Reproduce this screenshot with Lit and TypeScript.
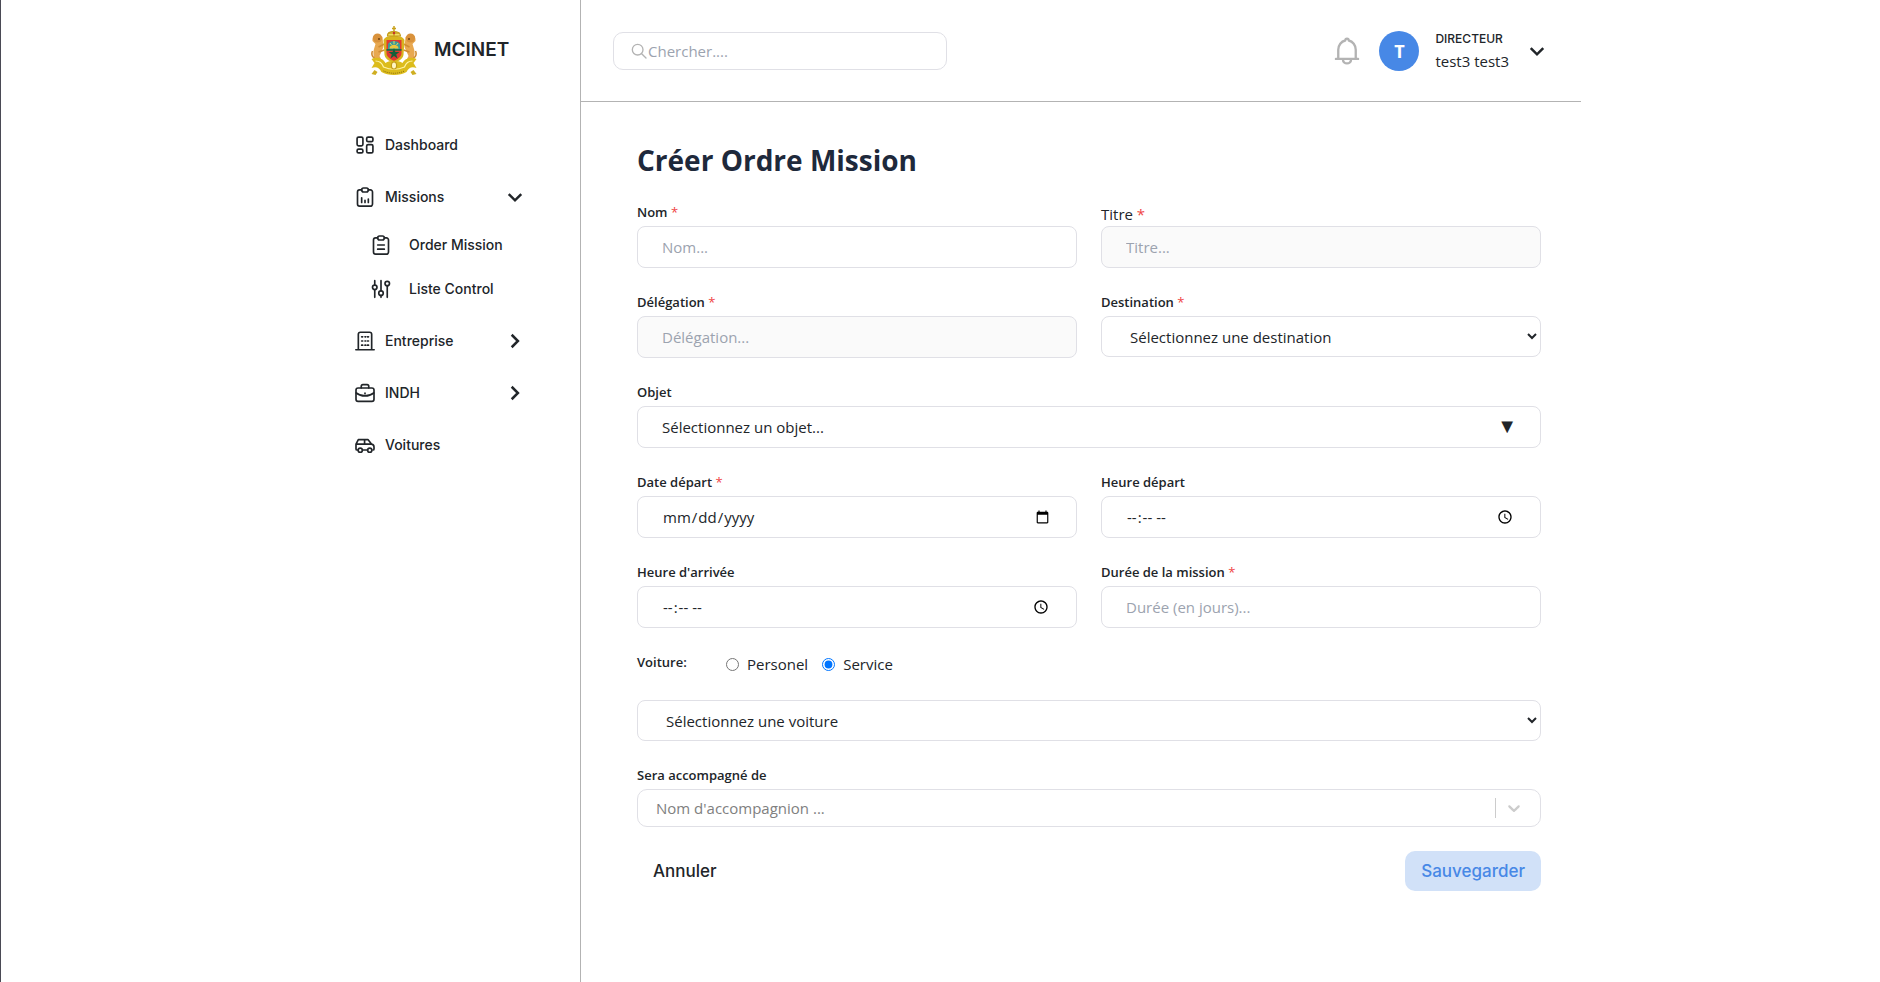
import { LitElement, html, css, svg } from "lit";
import { customElement, state } from "lit/decorators.js";

const ICONS: Record<string, unknown> = {
  dashboard: svg`<rect x="2.5" y="2.5" width="7" height="10.5" rx="1.8"/><rect x="14" y="2.5" width="7.5" height="5.5" rx="1.8"/><rect x="2.5" y="17" width="7" height="4.5" rx="1.8"/><rect x="14" y="11.500" width="7.500" height="10" rx="1.8"/>`,
  report: svg`<path d="M8 3.500H5.500a2.500 2.500 0 0 0-2.500 2.500V20.500a2.500 2.500 0 0 0 2.500 2.500h13a2.500 2.500 0 0 0 2.500-2.500V6a2.500 2.500 0 0 0-2.500-2.500H16"/><path d="M8 3.300C8 2 9 1.200 10.200 1.200h3.600C15 1.200 16 2 16 3.300S15 6 13.800 6h-3.600C9 6 8 4.600 8 3.300Z"/><path d="M8 18.500v-5.500M12 18.500v-2.500M16 18.500v-4"/>`,
  clipboard: svg`<path d="M8 3.500H5.500a2.500 2.500 0 0 0-2.500 2.500V20.500a2.500 2.500 0 0 0 2.500 2.500h13a2.500 2.500 0 0 0 2.500-2.500V6a2.500 2.500 0 0 0-2.500-2.500H16"/><path d="M8 3.300C8 2 9 1.200 10.200 1.200h3.600C15 1.200 16 2 16 3.300S15 6 13.800 6h-3.600C9 6 8 4.600 8 3.300Z"/><path d="M8 12h8M8 17h8"/>`,
  sliders: svg`<path d="M4.500 2v5M4.500 13v9M12 2v12M12 20v2M19.500 8v14"/><circle cx="4.500" cy="10" r="2.700"/><circle cx="12" cy="17" r="2.700"/><circle cx="19.500" cy="5.500" r="2.700"/>`,
  building: svg`<path d="M1 22.500h22M4 22V4a2.500 2.500 0 0 1 2.500-2.500h11A2.500 2.500 0 0 1 20 4v18"/><path d="M8 7h1.200M12 7h.8M15 7h1.200M8 12h1.200M12 12h.8M15 12h1.200M8 17h1.200M12 17h.8M15 17h1.200"/>`,
  briefcase: svg`<rect x="1.200" y="6" width="21.600" height="16" rx="2.500"/><path d="M7.500 6V4A2 2 0 0 1 9.500 2h5a2 2 0 0 1 2 2v2M1.500 12c6 4.700 15 4.700 21 0M12 12.200v.6"/>`,
  car: svg`<path d="M3.500 18H2.500a1.300 1.300 0 0 1-1.300-1.300V11L4 5.500h11.500L20 11c2 .5 2.800 1.500 2.800 3.500v2.200c0 .8-.5 1.300-1.300 1.300M9 18h6M1.500 11H20M11.500 5.500V11"/><circle cx="6.300" cy="18.200" r="2.500"/><circle cx="17.700" cy="18.200" r="2.500"/>`,
  down: svg`<path d="M4.500 8.500l7.500 7.500 7.500-7.500"/>`,
  right: svg`<path d="M8 4.500l7.500 7.500-7.500 7.500"/>`,
  search: svg`<circle cx="10" cy="10" r="8"/><path d="M16 16l6.500 6.500"/>`,
  bell: svg`<path d="M4.500 18.500V11c0-4 2.600-7.300 6-8 .1-2.100 2.900-2.100 3 0 3.400.7 6 4 6 8v7.500M2.500 18.800h19M8.500 19c0 4.900 7 4.900 7 0"/>`,
};

const icon = (name: string, cls = "icon") =>
  html`<svg class=${cls} viewBox="0 0 24 24" aria-hidden="true">${ICONS[name]}</svg>`;

const lion = svg`
  <path d="M9 10C5 8 1.500 11 2 16l3 3-1.500 5C2 29 4 31 3 36l3 3 5-4-2-4 4-9-1-10Z" fill="#e8a850"/>
  <circle cx="7" cy="13" r="4.600" fill="#d9923c"/><circle cx="8.500" cy="14" r="1" fill="#6d4211"/>
  <path d="M8 22l6-3M8 27l6-2M4 33c-3-1-3-5-2-7" fill="none" stroke="#d08b32" stroke-width="1.600"/>`;

const emblem = html`
  <svg class="emblem" viewBox="0 0 47 51" role="img" aria-label="Armoiries">
    ${lion}
    <g transform="translate(47 0) scale(-1 1)">${lion}</g>
    <path d="M13 15c2-4 6-4 10.500-4S32 11 34 15l-1 15c-1 5-6 6-9.500 8-3.500-2-8.500-3-9.500-8Z" fill="#d8b51f"/>
    <path d="M17 11c-1-6 13-6 13 0Z" fill="#f2dc66" stroke="#c29a18" stroke-width="1.200"/>
    <path d="M23.500 1v10M21.500 3.500h4M18 8h11" stroke="#c9a21c" stroke-width="1.500"/>
    <circle cx="23.500" cy="8" r="1.200" fill="#c8322d"/>
    <path d="M16 15h15v13c0 4-4 6-7.500 8-3.500-2-7.500-4-7.500-8Z" fill="#e03a30"/>
    <path d="M17.500 24v-5c2-4 10-4 12 0v5Z" fill="#3b9b9a"/>
    <path d="M19 23.500c0-5 9-5 9 0Z" fill="#ecc63a"/>
    <path d="M23.500 16v3M19.500 18l1.500 2M27.500 18L26 20" stroke="#e8d65c"/>
    <path d="M16 24h15v1.800H16Z" fill="#1d6b4a"/>
    <path d="M23.500 23l1.400 4h4.100l-3.300 2.500 1.300 4-3.500-2.500-3.500 2.500 1.300-4L18 27h4.100Z" fill="#14603a"/>
    <path d="M1 34c6-3 12 0 14 4 4-3 13-3 17 0 2-4 8-7 14-4l-3 4 3 5c-5-2-8 0-10 4-6 4-19 4-25 0-2-4-5-6-10-4l3-5Z" fill="#dcbc1c"/>
    <path d="M5 36c5 0 7 3 8 6 7 3 14 3 21 0 1-3 3-6 8-6" fill="none" stroke="#fff4a8" stroke-width="1.200"/>
    <path d="M13 46c7 3 14 3 21 0" fill="none" stroke="#8a6d10" stroke-dasharray="1 1"/>
    <ellipse cx="23.500" cy="40.500" rx="2.600" ry="3.500" fill="#fff6c4" stroke="#c29a18" stroke-width="1.200"/>
    <path d="M1 49l3-4 3 2-2 3Z M46 49l-3-4-3 2 2 3Z" fill="#cfae20"/>
  </svg>`;

const shared = css`
  * { box-sizing: border-box; }
  .icon { width: 20px; height: 20px; flex: none; fill: none; stroke: currentColor; stroke-width: 2; stroke-linecap: round; stroke-linejoin: round; }
  .chevron { width: 20px; height: 20px; flex: none; fill: none; stroke: currentColor; stroke-width: 3; }
  button, input, select { font: inherit; color: inherit; margin: 0; }
  button { border: 0; background: none; padding: 0; cursor: pointer; }
`;

@customElement("side-bar")
export class SideBar extends LitElement {
  static styles = [shared, css`
    :host { display: block; box-sizing: border-box; width: 280px; flex: none; font: 500 14px/20px Inter, sans-serif; }
    .brand { display: flex; align-items: center; gap: 16px; height: 100px; padding-left: 70px; font-size: 19px; font-weight: 600; line-height: 28px; }
    .emblem { width: 48px; height: 51px; flex: none; }
    nav { padding: 19px 55px 0; }
    ul { list-style: none; margin: 0; padding: 0; }
    .item { display: flex; align-items: center; gap: 10px; width: 100%; height: 52px; color: inherit; text-decoration: none; text-align: left; }
    .item span { flex: 1; }
    .sub { padding: 0 0 4px 16px; }
    .sub .item { height: 44px; gap: 18px; }
  `];
  @state() private open = true;
  private group(name: string, label: string) {
    return html`<button class="item" type="button" aria-expanded="false">${icon(name)}<span>${label}</span>${icon("right", "chevron")}</button>`;
  }
  private link(name: string, label: string) {
    return html`<a class="item" href="#">${icon(name)}<span>${label}</span></a>`;
  }
  render() {
    return html`
      <div class="brand">${emblem}<span>MCINET</span></div>
      <nav aria-label="Menu principal">
        <ul>
          <li>${this.link("dashboard", "Dashboard")}</li>
          <li>
            <button class="item" type="button" aria-expanded=${this.open} @click=${() => (this.open = !this.open)}>
              ${icon("report")}<span>Missions</span>${icon(this.open ? "down" : "right", "chevron")}
            </button>
            ${this.open ? html`<ul class="sub">
              <li>${this.link("clipboard", "Order Mission")}</li>
              <li>${this.link("sliders", "Liste Control")}</li>
            </ul>` : ""}
          </li>
          <li>${this.group("building", "Entreprise")}</li>
          <li>${this.group("briefcase", "INDH")}</li>
          <li>${this.link("car", "Voitures")}</li>
        </ul>
      </nav>`;
  }
}

@customElement("top-bar")
export class TopBar extends LitElement {
  static styles = [shared, css`
    :host { display: flex; box-sizing: border-box; align-items: center; justify-content: space-between; height: 102px; padding: 0 34px 0 32px; border-bottom: 1px solid #b3b3b3; }
    .search { display: flex; align-items: center; gap: 1px; width: 334px; height: 38px; padding: 0 17px; border: 1px solid #e0e0e6; border-radius: 10px; }
    .search .glass { width: 16px; height: 16px; flex: none; fill: none; stroke: #b3b3b3; stroke-width: 2; stroke-linecap: round; }
    .search input { flex: 1; min-width: 0; border: 0; outline: 0; padding: 0; background: none; }
    .search input::placeholder { color: #9ca3af; opacity: 1; }
    .user { display: flex; align-items: center; }
    .bell { display: flex; color: #b3b3b3; margin-right: 18px; }
    .bell svg { width: 28px; height: 28px; fill: none; stroke: currentColor; stroke-width: 2; stroke-linecap: round; stroke-linejoin: round; }
    .avatar { display: grid; place-items: center; width: 40px; height: 40px; border-radius: 50%; background: #4788e6; color: #fff; font-size: 18px; font-weight: 700; margin-right: 16px; }
    .who { display: grid; margin-right: 18px; }
    .role { font: 500 12px/20px Inter, sans-serif; }
    .menu { display: flex; }
  `];
  render() {
    return html`
      <label class="search">${icon("search", "glass")}<input type="search" placeholder="Chercher...." aria-label="Chercher" /></label>
      <div class="user">
        <button class="bell" type="button" aria-label="Notifications">${icon("bell", "")}</button>
        <div class="avatar">T</div>
        <div class="who"><span class="role">DIRECTEUR</span><span>test3 test3</span></div>
        <button class="menu" type="button" aria-label="Compte">${icon("down", "chevron")}</button>
      </div>`;
  }
}

@customElement("mission-form")
export class MissionForm extends LitElement {
  static styles = [shared, css`
    :host { display: block; padding: 40px 40px 40px 56px; }
    h1 { margin: 0 0 24px; font-size: 28px; line-height: 36px; font-weight: 700; color: #1e293b; }
    form { display: grid; grid-template-columns: 1fr 1fr; gap: 24px; align-items: start; }
    .wide { grid-column: 1 / -1; }
    .field { display: grid; min-width: 0; }
    .label { font-size: 13px; line-height: 20px; font-weight: 600; margin-bottom: 4px; }
    .label.plain { font-size: 15px; line-height: 24px; font-weight: 400; margin: 0; }
    .req { color: #ef4444; font-weight: 400; }
    .control { width: 100%; height: 42px; padding: 0 24px; border: 1px solid #e0e0e6; border-radius: 8px; background: #fff; }
    select.control { height: 41px; }
    .control::placeholder { color: #9ca3af; opacity: 1; }
    .control:disabled { background: #fafafa; }
    .combo { position: relative; display: grid; }
    .combo .control { appearance: none; height: 42px; }
    .combo .mark { position: absolute; right: 24px; top: 8px; font-size: 20px; pointer-events: none; }
    .radios { display: flex; align-items: start; border: 0; margin: 0; padding: 0; line-height: 24px; }
    .radios .label { width: 89px; margin: 0; }
    .radios label { display: flex; align-items: center; gap: 8px; margin-right: 14px; }
    .picker { display: flex; align-items: center; height: 38px; border: 1px solid #e0e0e6; border-radius: 10px; padding: 0 16px 0 18px; }
    .picker input { flex: 1; min-width: 0; border: 0; outline: 0; padding: 0; background: none; }
    .picker input::placeholder { color: #808080; opacity: 1; }
    .picker button { display: flex; height: 20px; padding-left: 8px; border-left: 1px solid #ccc; color: #ccc; }
    .picker svg { width: 20px; height: 20px; fill: currentColor; }
    .actions { display: flex; justify-content: space-between; }
    .btn { height: 40px; padding: 0 16px; border-radius: 10px; font: 500 17px/24px Inter, sans-serif; }
    .save { background: #d1e1f8; color: #4788e6; }
  `];
  private label(id: string, text: string, required = false, plain = false) {
    return html`<label class="label ${plain ? "plain" : ""}" for=${id}>${text}${required ? html` <span class="req">*</span>` : ""}</label>`;
  }
  private input(id: string, text: string, type: string, required: boolean, placeholder = "", disabled = false, plain = false) {
    return html`<div class="field">${this.label(id, text, required, plain)}
      <input class="control" id=${id} type=${type} placeholder=${placeholder} ?disabled=${disabled} /></div>`;
  }
  render() {
    return html`
      <h1>Créer Ordre Mission</h1>
      <form @submit=${(e: Event) => e.preventDefault()}>
        ${this.input("nom", "Nom", "text", true, "Nom...")}
        ${this.input("titre", "Titre", "text", true, "Titre...", true, true)}
        ${this.input("delegation", "Délégation", "text", true, "Délégation...", true)}
        <div class="field">${this.label("destination", "Destination", true)}
          <select class="control" id="destination"><option>Sélectionnez une destination</option></select></div>
        <div class="field wide">${this.label("objet", "Objet")}
          <div class="combo"><select class="control" id="objet"><option>Sélectionnez un objet...</option></select><span class="mark" aria-hidden="true">▼</span></div></div>
        ${this.input("date-depart", "Date départ", "date", true)}
        ${this.input("heure-depart", "Heure départ", "time", false)}
        ${this.input("heure-arrivee", "Heure d'arrivée", "time", false)}
        ${this.input("duree", "Durée de la mission", "text", true, "Durée (en jours)...")}
        <div class="radios wide" role="radiogroup" aria-labelledby="voiture-label">
          <span class="label" id="voiture-label">Voiture:</span>
          <label><input type="radio" name="voiture" value="personel" />Personel</label>
          <label><input type="radio" name="voiture" value="service" checked />Service</label>
        </div>
        <select class="control wide" aria-label="Voiture"><option>Sélectionnez une voiture</option></select>
        <div class="field wide">${this.label("compagnon", "Sera accompagné de")}
          <div class="picker">
            <input id="compagnon" type="text" role="combobox" aria-expanded="false" placeholder="Nom d'accompagnion ..." />
            <button type="button" aria-label="Ouvrir la liste"><svg viewBox="0 0 20 20" aria-hidden="true"><path d="M4.516 7.548c.436-.446 1.043-.481 1.576 0L10 11.295l3.908-3.747c.533-.481 1.141-.446 1.574 0 .436.445.408 1.197 0 1.615-.406.418-4.695 4.502-4.695 4.502a1.095 1.095 0 0 1-1.576 0S4.924 9.581 4.516 9.163s-.436-1.170 0-1.615z"/></svg></button>
          </div></div>
        <div class="actions wide">
          <button class="btn" type="button">Annuler</button>
          <button class="btn save" type="submit">Sauvegarder</button>
        </div>
      </form>`;
  }
}

@customElement("app-root")
export class AppRoot extends LitElement {
  static styles = css`
    :host { display: block; box-sizing: border-box; min-height: 100vh; border-left: 1px solid #4a4a55; background: #fff; color: #212529; font: 15px/24px "Open Sans", "Noto Sans", sans-serif; }
    .shell { display: flex; max-width: 1281px; min-height: 100vh; margin: 0 auto; }
    main { flex: 1; min-width: 0; border-left: 1px solid #b3b3b3; }
  `;
  render() {
    return html`<div class="shell"><side-bar></side-bar><main><top-bar></top-bar><mission-form></mission-form></main></div>`;
  }
}
